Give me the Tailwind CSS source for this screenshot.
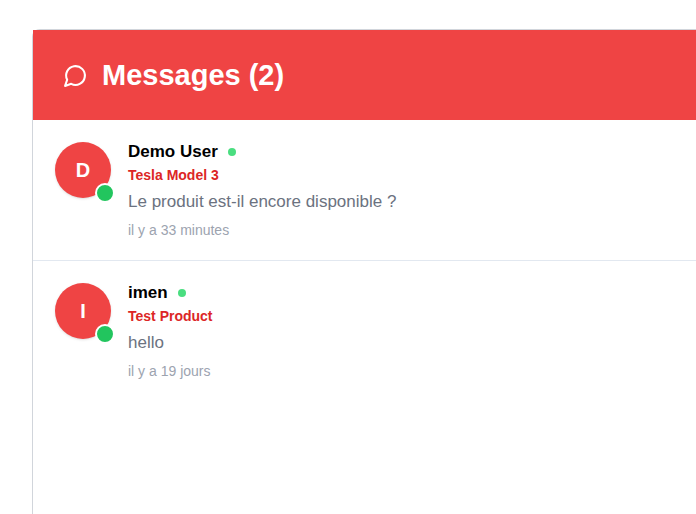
<!DOCTYPE html>
<html lang="fr">
<head>
<meta charset="utf-8">
<meta name="viewport" content="width=device-width, initial-scale=1">
<title>Messages</title>
<script src="https://cdn.jsdelivr.net/npm/@tailwindcss/browser@4"></script>
</head>
<body class="bg-white font-['Liberation_Sans',Arial,sans-serif]">
<main class="flex min-h-screen flex-col pt-[29px] pl-8">
  <section class="grow rounded-tl-lg border-t border-l border-[#d1d5db]">
    <header class="flex items-center gap-[14px] bg-[#ef4444] px-[30px] py-6 text-white">
      <svg class="size-[25px] shrink-0" viewBox="0 0 24 24" fill="none" stroke="currentColor" stroke-width="2" stroke-linecap="round" stroke-linejoin="round" aria-hidden="true"><path d="M7.9 20A9 9 0 1 0 4 16.1L2 22Z"/></svg>
      <h1 class="text-[29px] leading-[42px] font-bold">Messages (2)</h1>
    </header>
    <ul>
      <li class="flex gap-[17px] border-b border-[#e2e8f0] px-[22px] pt-[22px] pb-[18px]">
        <div class="relative flex size-14 shrink-0 items-center justify-center rounded-full bg-[#ef4444] text-xl font-bold text-white shadow-sm">D
          <span class="absolute -right-1 -bottom-[5px] size-5 rounded-full border-2 border-white bg-[#22c55e]"></span>
        </div>
        <div class="min-w-0">
          <h2 class="flex items-center gap-[10px] text-[17px] leading-5 font-bold text-black">Demo User <span class="size-2 rounded-full bg-[#4ade80]"></span></h2>
          <p class="pt-px text-[14px] leading-6 font-bold text-[#dc2626]">Tesla Model 3</p>
          <p class="text-[17px] leading-[30px] text-[#6b7280]">Le produit est-il encore disponible ?</p>
          <p class="pt-px text-[14px] leading-6 text-[#9ca3af]">il y a 33 minutes</p>
        </div>
      </li>
      <li class="flex gap-[17px] px-[22px] pt-[22px] pb-[18px]">
        <div class="relative flex size-14 shrink-0 items-center justify-center rounded-full bg-[#ef4444] text-xl font-bold text-white shadow-sm">I
          <span class="absolute -right-1 -bottom-[5px] size-5 rounded-full border-2 border-white bg-[#22c55e]"></span>
        </div>
        <div class="min-w-0">
          <h2 class="flex items-center gap-[10px] text-[17px] leading-5 font-bold text-black">imen <span class="size-2 rounded-full bg-[#4ade80]"></span></h2>
          <p class="pt-px text-[14px] leading-6 font-bold text-[#dc2626]">Test Product</p>
          <p class="text-[17px] leading-[30px] text-[#6b7280]">hello</p>
          <p class="pt-px text-[14px] leading-6 text-[#9ca3af]">il y a 19 jours</p>
        </div>
      </li>
    </ul>
  </section>
</main>
</body>
</html>
